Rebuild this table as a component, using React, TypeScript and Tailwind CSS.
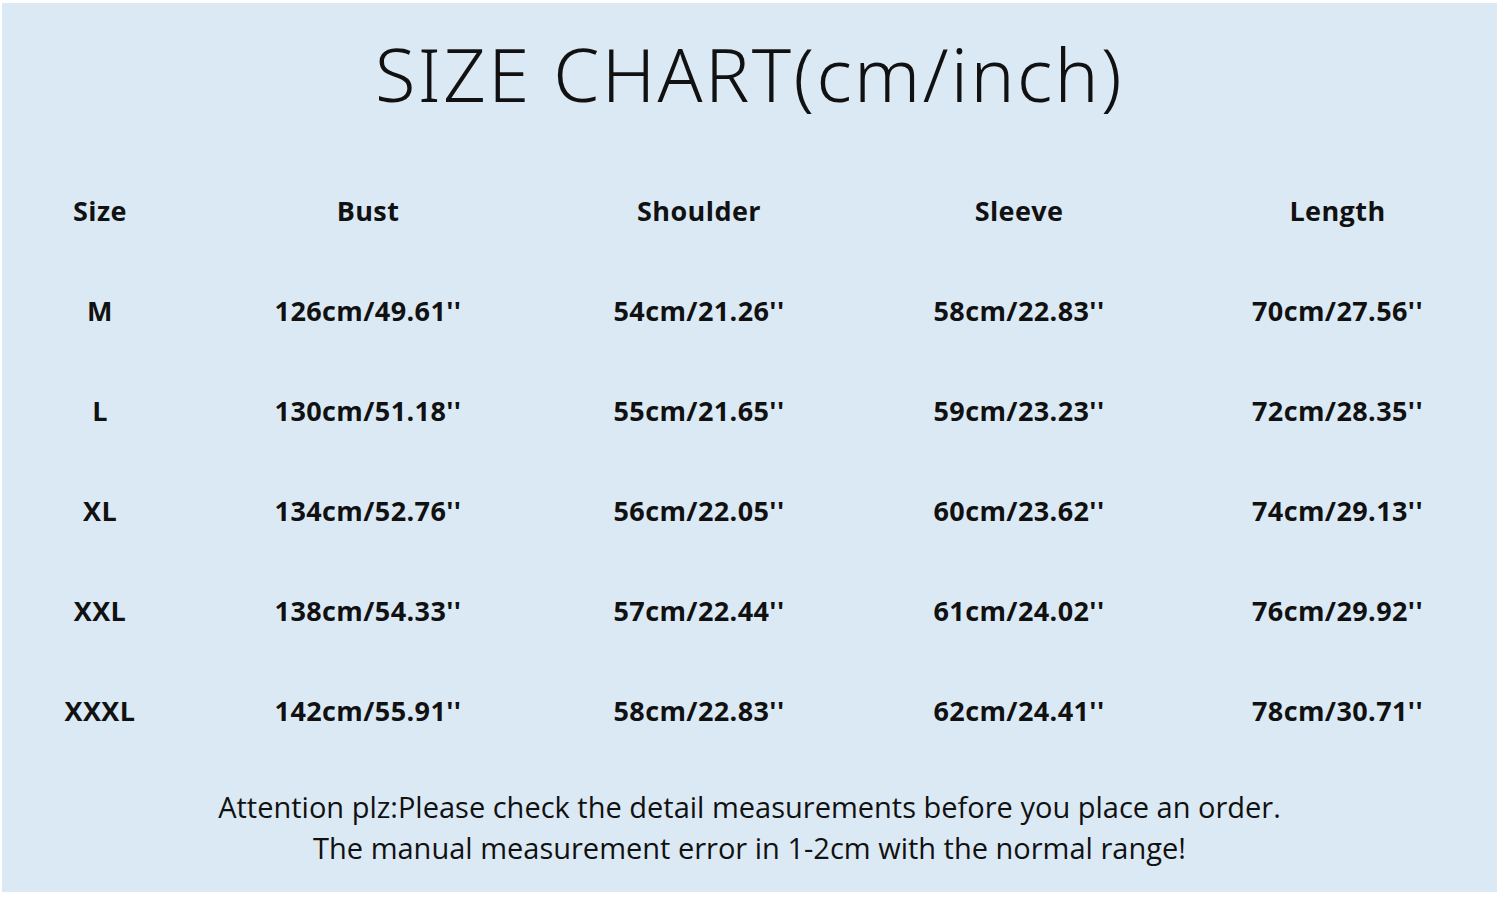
import React from "react";

const rows = [
  ["M", "126cm/49.61''", "54cm/21.26''", "58cm/22.83''", "70cm/27.56''"],
  ["L", "130cm/51.18''", "55cm/21.65''", "59cm/23.23''", "72cm/28.35''"],
  ["XL", "134cm/52.76''", "56cm/22.05''", "60cm/23.62''", "74cm/29.13''"],
  ["XXL", "138cm/54.33''", "57cm/22.44''", "61cm/24.02''", "76cm/29.92''"],
  ["XXXL", "142cm/55.91''", "58cm/22.83''", "62cm/24.41''", "78cm/30.71''"],
];

const header = ["Size", "Bust", "Shoulder", "Sleeve", "Length"];

export default function App() {
  return (
    <div className="w-[1500px] h-[897px] bg-white pt-[3px] pl-[2px]">
      <div className="w-[1495px] h-[889px] bg-[#dbe9f5] flex flex-col items-center text-[#111]">
        <div
          className="mt-[26px] h-[90px] text-[74px] leading-[90px] tracking-[2.4px] font-light"
          style={{ fontFamily: '"Noto Sans", sans-serif' }}
        >
          SIZE CHART(cm/inch)
        </div>
        <div
          className="mt-[42px] w-full grid grid-cols-[196px_340px_322px_318px_319px] auto-rows-[100px] font-bold text-[27px] tracking-[0.4px]"
          style={{ fontFamily: '"Open Sans", sans-serif' }}
        >
          {[header, ...rows].map((r, i) => (
            <React.Fragment key={i}>
              {r.map((c, j) => (
                <div key={j} className="flex items-center justify-center">
                  {c}
                </div>
              ))}
            </React.Fragment>
          ))}
        </div>
        <div
          className="mt-[25px] text-center text-[29px] leading-[41px]"
          style={{ fontFamily: '"Open Sans", sans-serif' }}
        >
          <div>Attention plz:Please check the detail measurements before you place an order.</div>
          <div>The manual measurement error in 1-2cm with the normal range!</div>
        </div>
      </div>
    </div>
  );
}
